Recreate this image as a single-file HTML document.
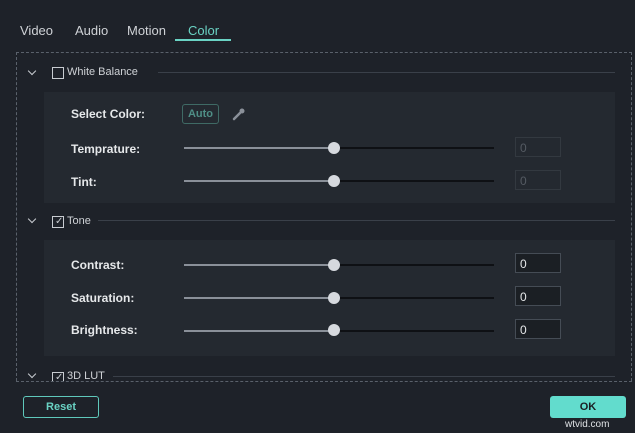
<!DOCTYPE html>
<html><head><style>
*{margin:0;padding:0;box-sizing:border-box}
body{width:635px;height:433px;background:#1e2229;font-family:"Liberation Sans",sans-serif;position:relative;overflow:hidden;color:#e6e8ea}
.a{position:absolute}
.tab{font-size:13px;color:#cfd2d6;top:23px}
.dash{left:16px;top:52px;width:616px;height:329px;border:1px dashed #5a616b;border-bottom:none}
.hd{font-size:11px;color:#cfd2d6}
.cb{width:12px;height:12px;border:1px solid #c8ccd1}
.line{height:1px;background:#3a4049}
.panel{background:#242930;left:44px;width:571px}
.lbl{left:71px;font-size:12px;font-weight:bold;color:#e6e8ea}
.tr{left:184px;width:310px;height:2px;background:#0e1014}
.trl{left:184px;width:150px;height:2px;background:#8a9099}
.kn{width:12px;height:12px;border-radius:50%;background:#d6d9de;left:328px}
.in{left:515px;width:46px;height:20px;border:1px solid #454c55;background:#1b1f24;font-size:12px;padding:3px 0 0 4px;color:#e6e8ea}
.dis{border-color:#333940;color:#555b63;background:transparent}
.chev{left:29px;width:6px;height:6px;border-right:1.3px solid #c8ccd1;border-bottom:1.3px solid #c8ccd1;transform:rotate(45deg)}
</style></head><body>
<div class="a tab" style="left:20px">Video</div>
<div class="a tab" style="left:75px">Audio</div>
<div class="a tab" style="left:127px">Motion</div>
<div class="a tab" style="left:188px;color:#6ad3c4">Color</div>
<div class="a" style="left:175px;top:39px;width:56px;height:2px;background:#6ad3c4"></div>
<div class="a dash"></div>

<div class="a chev" style="top:68px"></div>
<div class="a cb" style="left:52px;top:67px"></div>
<div class="a hd" style="left:67px;top:66px">White Balance</div>
<div class="a line" style="left:158px;top:72px;width:457px"></div>
<div class="a panel" style="top:92px;height:111px"></div>
<div class="a lbl" style="top:107px">Select Color:</div>
<div class="a" style="left:182px;top:104px;width:37px;height:20px;border:1px solid #3f6a65;border-radius:3px;font-size:11px;font-weight:bold;color:#4f8e86;text-align:center;line-height:18px">Auto</div>
<svg class="a" style="left:232px;top:107px" width="14" height="14" viewBox="0 0 14 14"><path d="M2 12 L8 6" stroke="#8a9099" stroke-width="2.5" stroke-linecap="round"/><circle cx="10" cy="4" r="2.5" fill="#8a9099"/></svg>
<div class="a lbl" style="top:142px">Temprature:</div>
<div class="a tr" style="top:147px"></div><div class="a trl" style="top:147px"></div><div class="a kn" style="top:142px"></div>
<div class="a in dis" style="top:137px">0</div>
<div class="a lbl" style="top:175px">Tint:</div>
<div class="a tr" style="top:180px"></div><div class="a trl" style="top:180px"></div><div class="a kn" style="top:175px"></div>
<div class="a in dis" style="top:170px">0</div>

<div class="a chev" style="top:216px"></div>
<div class="a cb" style="left:52px;top:216px"></div>
<div class="a" style="left:55px;top:216px;font-size:10px;color:#c8ccd1">✓</div>
<div class="a hd" style="left:67px;top:215px">Tone</div>
<div class="a line" style="left:98px;top:220px;width:517px"></div>
<div class="a panel" style="top:240px;height:116px"></div>
<div class="a lbl" style="top:258px">Contrast:</div>
<div class="a tr" style="top:264px"></div><div class="a trl" style="top:264px"></div><div class="a kn" style="top:259px"></div>
<div class="a in" style="top:253px">0</div>
<div class="a lbl" style="top:291px">Saturation:</div>
<div class="a tr" style="top:297px"></div><div class="a trl" style="top:297px"></div><div class="a kn" style="top:292px"></div>
<div class="a in" style="top:286px">0</div>
<div class="a lbl" style="top:323px">Brightness:</div>
<div class="a tr" style="top:330px"></div><div class="a trl" style="top:330px"></div><div class="a kn" style="top:324px"></div>
<div class="a in" style="top:319px">0</div>

<div style="position:absolute;left:0;top:368px;width:635px;height:13px;overflow:hidden">
<div class="a chev" style="top:3px"></div>
<div class="a cb" style="left:52px;top:4px"></div>
<div class="a" style="left:55px;top:4px;font-size:10px;color:#c8ccd1">✓</div>
<div class="a hd" style="left:67px;top:2px">3D LUT</div>
<div class="a line" style="left:113px;top:8px;width:502px"></div>
</div>
<div class="a" style="left:16px;top:381px;width:616px;border-top:1px dashed #5a616b"></div>

<div class="a" style="left:23px;top:396px;width:76px;height:22px;border:1px solid #5fc9bb;border-radius:3px;font-size:11px;font-weight:bold;color:#6ad3c4;text-align:center;line-height:20px">Reset</div>
<div class="a" style="left:550px;top:396px;width:76px;height:22px;background:#62dccd;border-radius:3px;font-size:11px;font-weight:bold;color:#1b1f24;text-align:center;line-height:22px">OK</div>
<div class="a" style="left:565px;top:419px;font-size:10px;color:#dfe2e5">wtvid.com</div>
</body></html>
